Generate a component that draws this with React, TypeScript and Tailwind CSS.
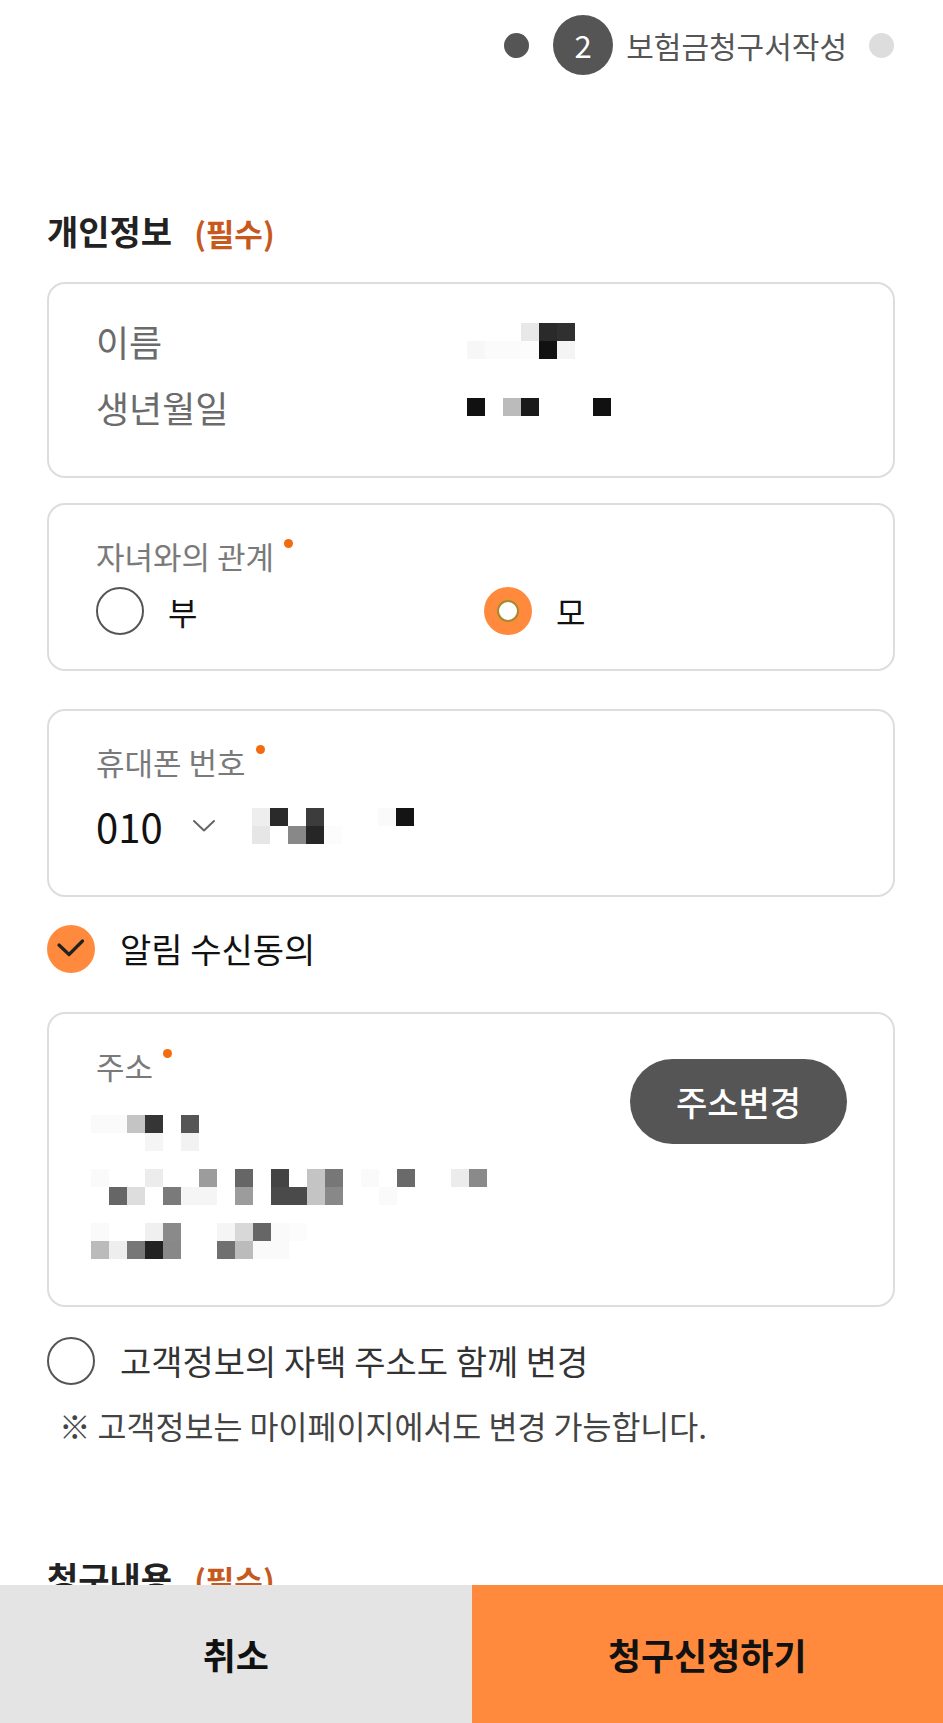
import React, { useState } from 'react';

type MosaicRows = string[][];

// 가려진 개인정보 영역 (모자이크 블록)
const nameBlocks: MosaicRows = [
    ['', '', '', 'bg-[#e8e8e8]', 'bg-[#2a2a2a]', 'bg-[#303030]'],
    ['bg-[#f7f7f7]', 'bg-[#fbfbfb]', 'bg-[#fbfbfb]', 'bg-[#fcfcfc]', 'bg-[#111111]', 'bg-[#f4f4f4]'],
];

const birthBlocks: MosaicRows = [
    ['bg-[#111111]', '', 'bg-[#bbbbbb]', 'bg-[#1a1a1a]', '', '', '', 'bg-[#111111]'],
];

const phoneBlocks: MosaicRows = [
    ['bg-[#eeeeee]', 'bg-[#2a2a2a]', '', 'bg-[#3c3c3c]', '', '', '', 'bg-[#fafafa]', 'bg-[#141414]'],
    ['bg-[#e6e6e6]', '', 'bg-[#888888]', 'bg-[#262626]', 'bg-[#fcfcfc]', '', '', '', ''],
];

const addressBlocks: MosaicRows[] = [
    [
        ['bg-[#fafafa]', 'bg-[#fafafa]', 'bg-[#c4c4c4]', 'bg-[#353535]', '', 'bg-[#555555]'],
        ['', '', '', 'bg-[#f5f5f5]', '', 'bg-[#f2f2f2]'],
    ],
    [
        ['bg-[#fafafa]', '', '', 'bg-[#ececec]', '', '', 'bg-[#9c9c9c]', '', 'bg-[#666666]', '', 'bg-[#444444]', '', 'bg-[#c4c4c4]', 'bg-[#777777]', '', 'bg-[#fafafa]', '', 'bg-[#6a6a6a]', '', '', 'bg-[#ececec]', 'bg-[#8a8a8a]'],
        ['', 'bg-[#666666]', 'bg-[#dddddd]', '', 'bg-[#7a7a7a]', 'bg-[#f5f5f5]', 'bg-[#f5f5f5]', '', 'bg-[#9c9c9c]', '', 'bg-[#4a4a4a]', 'bg-[#4a4a4a]', 'bg-[#c4c4c4]', 'bg-[#888888]', '', '', 'bg-[#fafafa]', '', '', '', '', ''],
    ],
    [
        ['bg-[#fafafa]', '', '', 'bg-[#f0f0f0]', 'bg-[#8a8a8a]', '', '', 'bg-[#f5f5f5]', 'bg-[#d8d8d8]', 'bg-[#666666]', 'bg-[#fafafa]', 'bg-[#fcfcfc]'],
        ['bg-[#bbbbbb]', 'bg-[#eeeeee]', 'bg-[#777777]', 'bg-[#222222]', 'bg-[#888888]', '', '', 'bg-[#707070]', 'bg-[#bbbbbb]', 'bg-[#fafafa]', 'bg-[#fafafa]', ''],
    ],
];

const Mosaic: React.FC<{ rows: MosaicRows }> = ({ rows }) => (
    <div className="flex flex-col">
        {rows.map((row, i) => (
            <div key={i} className="flex">
                {row.map((c, j) => (
                    <span key={j} className={`block h-[18px] w-[18px] ${c}`} />
                ))}
            </div>
        ))}
    </div>
);

const RequiredDot = () => (
    <span className="ml-[10px] mt-[3px] h-[9px] w-[9px] self-start rounded-full bg-[#f26b0f]" />
);

const FieldLabel: React.FC<{ text: string }> = ({ text }) => (
    <div className="flex h-[40px] items-center">
        <span className="text-[31px] leading-[40px] text-[#7a7a7a]">{text}</span>
        <RequiredDot />
    </div>
);

const Radio: React.FC<{ checked: boolean; onClick: () => void; label: string }> = ({ checked, onClick, label }) => (
    <button onClick={onClick} className="flex items-center gap-[24px]">
        {checked ? (
            <span className="flex h-[48px] w-[48px] items-center justify-center rounded-full bg-[#ff8a3d]">
                <span className="h-[22px] w-[22px] rounded-full border-2 border-[#a68b2d] bg-white" />
            </span>
        ) : (
            <span className="h-[48px] w-[48px] rounded-full border-2 border-[#555555] bg-white" />
        )}
        <span className="text-[32px] leading-[40px] text-[#111111]">{label}</span>
    </button>
);

const SectionTitle: React.FC<{ title: string }> = ({ title }) => (
    <h2 className="flex h-[40px] items-center gap-[22px]">
        <span className="text-[34px] font-bold leading-[40px] text-[#222222]">{title}</span>
        <span className="pt-[4px] text-[31px] font-semibold leading-[40px] text-[#c65a1e]">(필수)</span>
    </h2>
);

const ClaimForm: React.FC = () => {
    const [relation, setRelation] = useState<'father' | 'mother'>('mother');
    const [notify, setNotify] = useState(true);
    const [syncAddress, setSyncAddress] = useState(false);

    return (
        <div className="min-h-screen bg-white font-['Noto_Sans_CJK_KR','Noto_Sans',sans-serif] text-[#222222]">
            {/* 진행 단계 */}
            <div className="flex h-[90px] items-center justify-end pr-[49px]">
                <span className="h-[25px] w-[25px] rounded-full bg-[#555555]" />
                <span className="ml-[24px] flex h-[60px] w-[60px] items-center justify-center rounded-full bg-[#555555] text-[31px] text-white">
                    2
                </span>
                <span className="ml-[13px] text-[30px] leading-[40px] text-[#555555]">보험금청구서작성</span>
                <span className="ml-[22px] h-[25px] w-[25px] rounded-full bg-[#dddddd]" />
            </div>

            <div className="px-[47px] pr-[48px]">
                <div className="mt-[121px]">
                    <SectionTitle title="개인정보" />
                </div>

                {/* 이름 / 생년월일 */}
                <div className="mt-[31px] h-[196px] rounded-[18px] border-2 border-[#dddddd] px-[47px] pt-[24px]">
                    <div className="grid h-[66px] grid-cols-[371px_1fr] items-center">
                        <span className="text-[36px] leading-[40px] text-[#6b6b6b]">이름</span>
                        <Mosaic rows={nameBlocks} />
                    </div>
                    <div className="grid h-[66px] grid-cols-[371px_1fr] items-center">
                        <span className="text-[36px] leading-[40px] text-[#6b6b6b]">생년월일</span>
                        <Mosaic rows={birthBlocks} />
                    </div>
                </div>

                {/* 자녀와의 관계 */}
                <div className="mt-[25px] h-[168px] rounded-[18px] border-2 border-[#dddddd] px-[47px] pt-[31px]">
                    <FieldLabel text="자녀와의 관계" />
                    <div className="mt-[10px] grid h-[50px] grid-cols-[388px_1fr] items-center">
                        <Radio checked={relation === 'father'} onClick={() => setRelation('father')} label="부" />
                        <Radio checked={relation === 'mother'} onClick={() => setRelation('mother')} label="모" />
                    </div>
                </div>

                {/* 휴대폰 번호 */}
                <div className="mt-[38px] h-[188px] rounded-[18px] border-2 border-[#dddddd] px-[47px] pt-[31px]">
                    <FieldLabel text="휴대폰 번호" />
                    <div className="mt-[19px] flex h-[50px] items-center">
                        <span className="w-[96px] text-[40px] leading-[50px] text-[#111111]">010</span>
                        <svg className="h-[14px] w-[24px]" viewBox="0 0 24 14" fill="none">
                            <path d="M2 2 L12 11.5 L22 2" stroke="#666666" strokeWidth="2" strokeLinecap="round" strokeLinejoin="round" />
                        </svg>
                        <div className="ml-[36px]">
                            <Mosaic rows={phoneBlocks} />
                        </div>
                    </div>
                </div>

                {/* 알림 수신동의 */}
                <button onClick={() => setNotify(!notify)} className="mt-[27px] flex h-[50px] items-center gap-[25px]">
                    {notify ? (
                        <span className="flex h-[48px] w-[48px] items-center justify-center rounded-full bg-[#ff8a3d]">
                            <svg className="h-[48px] w-[48px]" viewBox="0 0 48 48" fill="none">
                                <path d="M12 20 L22 29.5 L35.5 16" stroke="#222222" strokeWidth="3.2" strokeLinecap="round" strokeLinejoin="round" />
                            </svg>
                        </span>
                    ) : (
                        <span className="h-[48px] w-[48px] rounded-full border-2 border-[#555555]" />
                    )}
                    <span className="text-[34px] leading-[40px] text-[#111111]">알림 수신동의</span>
                </button>

                {/* 주소 */}
                <div className="mt-[38px] flex h-[295px] justify-between rounded-[18px] border-2 border-[#dddddd] pl-[47px] pr-[46px]">
                    <div className="pt-[32px]">
                        <FieldLabel text="주소" />
                        <div className="-ml-[5px] mt-[29px] flex flex-col gap-[18px]">
                            {addressBlocks.map((rows, i) => (
                                <Mosaic key={i} rows={rows} />
                            ))}
                        </div>
                    </div>
                    <button className="mt-[45px] flex h-[85px] w-[217px] items-center justify-center rounded-full bg-[#555555] text-[34px] font-medium text-white">
                        주소변경
                    </button>
                </div>

                {/* 고객정보 주소 변경 */}
                <button onClick={() => setSyncAddress(!syncAddress)} className="mt-[29px] flex h-[50px] items-center gap-[25px]">
                    {syncAddress ? (
                        <span className="flex h-[48px] w-[48px] items-center justify-center rounded-full bg-[#ff8a3d]">
                            <span className="h-[22px] w-[22px] rounded-full border-2 border-[#a68b2d] bg-white" />
                        </span>
                    ) : (
                        <span className="h-[48px] w-[48px] rounded-full border-2 border-[#555555]" />
                    )}
                    <span className="text-[34px] leading-[40px] text-[#333333]">고객정보의 자택 주소도 함께 변경</span>
                </button>
                <p className="mt-[19px] pl-[12px] text-[31.5px] leading-[40px] text-[#444444]">
                    ※ 고객정보는 마이페이지에서도 변경 가능합니다.
                </p>

                <div className="mt-[113px]">
                    <SectionTitle title="청구내용" />
                </div>
            </div>

            {/* 하단 버튼 */}
            <div className="fixed inset-x-0 bottom-0 grid h-[138px] grid-cols-2">
                <button className="bg-[#e4e4e4] text-[36px] font-bold text-[#111111]">취소</button>
                <button className="bg-[#ff8a3d] text-[36px] font-bold text-[#111111]">청구신청하기</button>
            </div>
        </div>
    );
};

export default function App() {
    return <ClaimForm />;
}
